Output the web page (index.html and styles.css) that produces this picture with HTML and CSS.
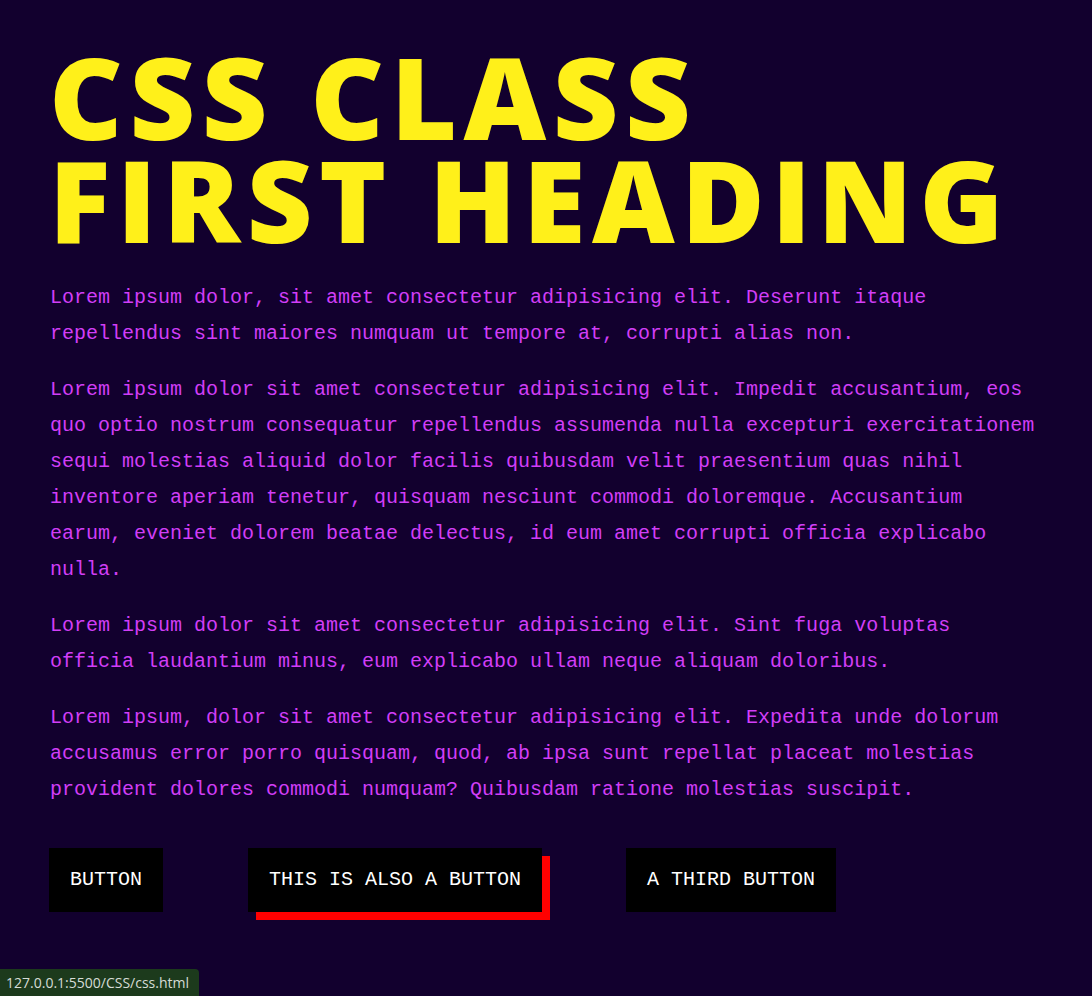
FILE: index.html
```html
<!DOCTYPE html>
<html lang="en">
<head>
<meta charset="utf-8">
<title>CSS</title>
<link rel="stylesheet" href="styles.css">
</head>
<body>
<main class="page">
  <h1 class="first-heading"><span class="line">CSS CLASS</span><span class="line">FIRST HEADING</span></h1>
  <p class="copy">Lorem ipsum dolor, sit amet consectetur adipisicing elit. Deserunt itaque repellendus sint maiores numquam ut tempore at, corrupti alias non.</p>
  <p class="copy">Lorem ipsum dolor sit amet consectetur adipisicing elit. Impedit accusantium, eos quo optio nostrum consequatur repellendus assumenda nulla excepturi exercitationem sequi molestias aliquid dolor facilis quibusdam velit praesentium quas nihil inventore aperiam tenetur, quisquam nesciunt commodi doloremque. Accusantium earum, eveniet dolorem beatae delectus, id eum amet corrupti officia explicabo nulla.</p>
  <p class="copy">Lorem ipsum dolor sit amet consectetur adipisicing elit. Sint fuga voluptas officia laudantium minus, eum explicabo ullam neque aliquam doloribus.</p>
  <p class="copy">Lorem ipsum, dolor sit amet consectetur adipisicing elit. Expedita unde dolorum accusamus error porro quisquam, quod, ab ipsa sunt repellat placeat molestias provident dolores commodi numquam? Quibusdam ratione molestias suscipit.</p>
  <div class="buttons">
    <button class="btn">BUTTON</button>
    <button class="btn btn-shadow">THIS IS ALSO A BUTTON</button>
    <button class="btn">A THIRD BUTTON</button>
  </div>
</main>
<div class="status">127.0.0.1:5500/CSS/css.html</div>
</body>
</html>
```
FILE: styles.css
```css
html, body {
  margin: 0;
  padding: 0;
  background: #12002e;
}
body {
  min-height: 996px;
}
.page {
  padding: 44px 50px 0 49px;
  box-sizing: border-box;
  width: 1092px;
}
.first-heading {
  margin: 0 0 30px 0;
  font-family: "Open Sans", sans-serif;
  font-weight: 800;
  font-size: 114px;
  line-height: 103px;
  color: #fff01a;
  letter-spacing: 6.5px;
}
.first-heading .line {
  display: block;
  white-space: nowrap;
}
.copy {
  margin: 0 0 20px 1px;
  font-family: "Liberation Mono", monospace;
  font-size: 20px;
  line-height: 36px;
  color: #d13ef7;
}
.buttons {
  display: flex;
  gap: 85px;
  margin-top: 40px;
}
.btn {
  font-family: "Liberation Mono", monospace;
  font-size: 20px;
  line-height: 24px;
  color: #ffffff;
  background: #000000;
  border: none;
  padding: 20px 21px;
  margin: 0;
  cursor: pointer;
}
.btn-shadow {
  box-shadow: 8px 8px 0 #ff0000;
  margin-right: -1px;
}
.status {
  position: fixed;
  left: 0;
  bottom: 0;
  height: 27px;
  line-height: 27px;
  padding: 0 10px 0 6px;
  background: #1c3a1c;
  color: #d6dcd6;
  font-family: "Open Sans", sans-serif;
  font-size: 14px;
  border-top-right-radius: 4px;
}
```
